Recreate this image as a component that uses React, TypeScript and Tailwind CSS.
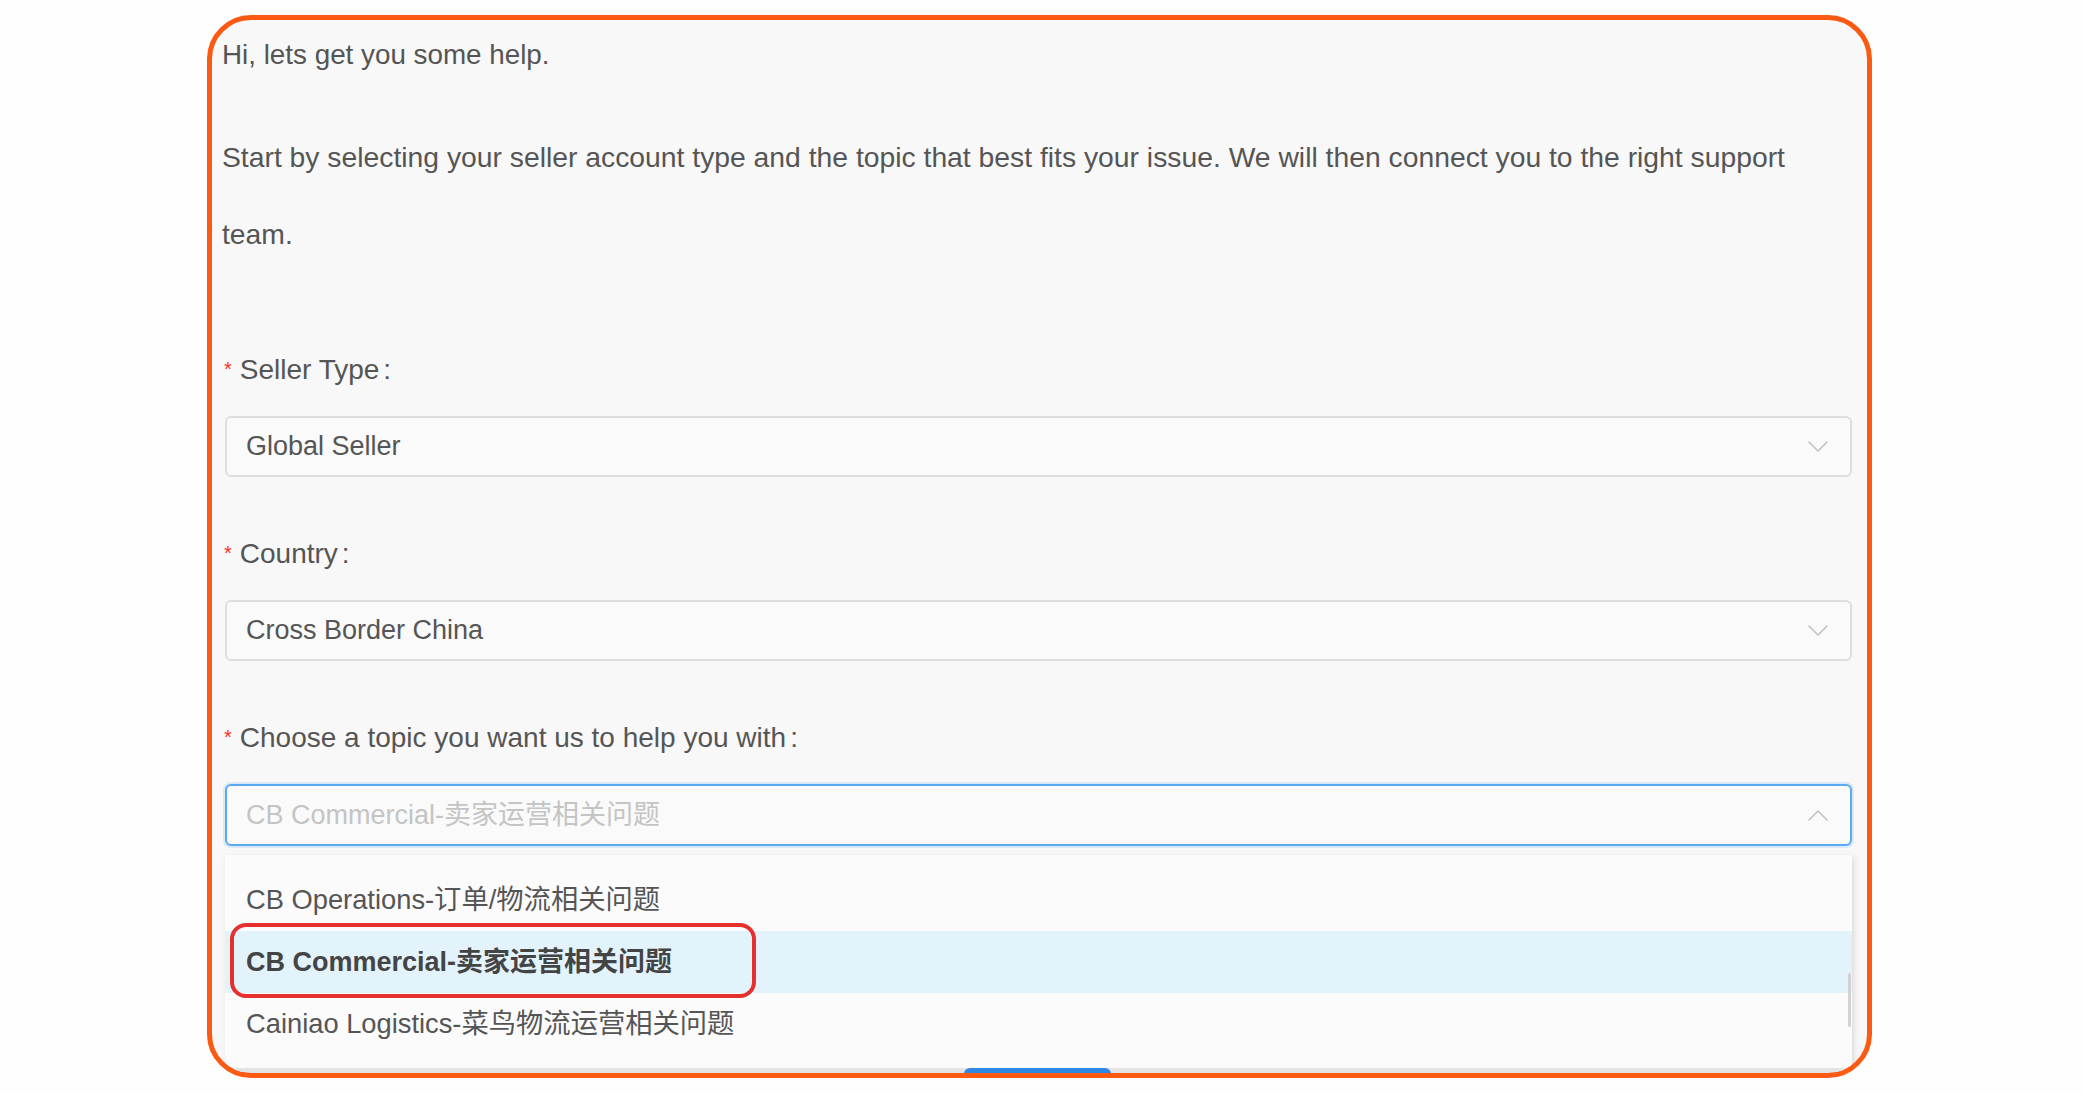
import React from "react";

const font = {
  fontFamily: '"Liberation Sans", "Noto Sans CJK SC", Arial, sans-serif',
};

const Chevron = ({ up = false }: { up?: boolean }) => (
  <svg width="20" height="12" viewBox="0 0 20 12" fill="none">
    <polyline
      points={up ? "1,11 10,2 19,11" : "1,1 10,10 19,1"}
      stroke="#c2c2c2"
      strokeWidth="1.6"
      strokeLinecap="round"
      strokeLinejoin="round"
    />
  </svg>
);

interface FormItemProps {
  label: string;
  value: string;
  className?: string;
}

const Label = ({ text }: { text: string }) => (
  <div className="flex h-[40px] items-center text-[28px] text-[#555]">
    <span className="ml-[2px] mr-[8px] mt-[-2px] text-[20px] text-[#f5322d]">*</span>
    <span>{text}</span>
    <span className="ml-[4px]">:</span>
  </div>
);

const FormItem = ({ label, value, className = "" }: FormItemProps) => (
  <div className={className}>
    <Label text={label} />
    <div className="ml-[3px] mt-[26px] flex h-[61px] items-center justify-between rounded-[6px] border-2 border-[#dedede] bg-[#fafafa] pl-[19px] pr-[22px]">
      <span className="text-[27px] text-[#555]">{value}</span>
      <Chevron />
    </div>
  </div>
);

const options = [
  "CB Operations-订单/物流相关问题",
  "CB Commercial-卖家运营相关问题",
  "Cainiao Logistics-菜鸟物流运营相关问题",
];

export default function App() {
  return (
    <div className="h-[1094px] w-[2085px] bg-[#fefefe] pl-[207px] pt-[15px]" style={font}>
      <div className="h-[1063px] w-[1665px] overflow-hidden rounded-[44px] border-[5px] border-[#fa5a12] bg-[#f8f8f8]">
        <div className="pl-[10px] pr-[15px] pt-[15px]">
          <p className="text-[27.8px] leading-[40px] text-[#555]">Hi, lets get you some help.</p>
          <p className="mt-[44px] whitespace-nowrap text-[28.3px] leading-[77px] text-[#555]">
            Start by selecting your seller account type and the topic that best fits your issue. We will then connect you to the right support
            <br />
            team.
          </p>

          <FormItem className="mt-[77px]" label="Seller Type" value="Global Seller" />
          <FormItem className="mt-[57px]" label="Country" value="Cross Border China" />

          {/* topic select, opened */}
          <div className="relative mt-[57px]">
            <Label text="Choose a topic you want us to help you with" />
            <div className="ml-[3px] mt-[26px] flex h-[62px] items-center justify-between rounded-[6px] border-2 border-[#5aa9f2] bg-[#fafafa] pl-[19px] pr-[22px] shadow-[0_0_0_2px_rgba(90,169,242,0.18)]">
              <span className="text-[27px] text-[#c4c4c4]">CB Commercial-卖家运营相关问题</span>
              <Chevron up />
            </div>

            <div className="absolute left-[3px] right-0 top-[137px] z-10 h-[217px] border-b-4 border-[#e4e4e4] bg-[#fbfbfb] pt-[14px] shadow-[2px_2px_6px_rgba(0,0,0,0.12)]">
              {options.map((o, i) => (
                <div
                  key={o}
                  className={`relative flex h-[62px] items-center pl-[21px] ${i === 1 ? "bg-[#e2f3fc] text-[27px] font-bold text-[#444]" : "text-[27.3px] text-[#555]"}`}
                >
                  {o}
                  {i === 1 && (
                    <div className="absolute left-[5px] top-[-8px] h-[75px] w-[526px] rounded-[16px] border-[4px] border-[#e5302d]" />
                  )}
                </div>
              ))}
              <div className="absolute right-[1px] top-[118px] h-[54px] w-[3px] rounded-full bg-[#d2d2d2]" />
            </div>
          </div>

          <button className="relative z-20 mx-auto mt-[222px] block h-[48px] w-[147px] rounded-[6px] bg-[#2f87e4] text-[22px] text-white">
            Submit
          </button>
        </div>
      </div>
    </div>
  );
}
